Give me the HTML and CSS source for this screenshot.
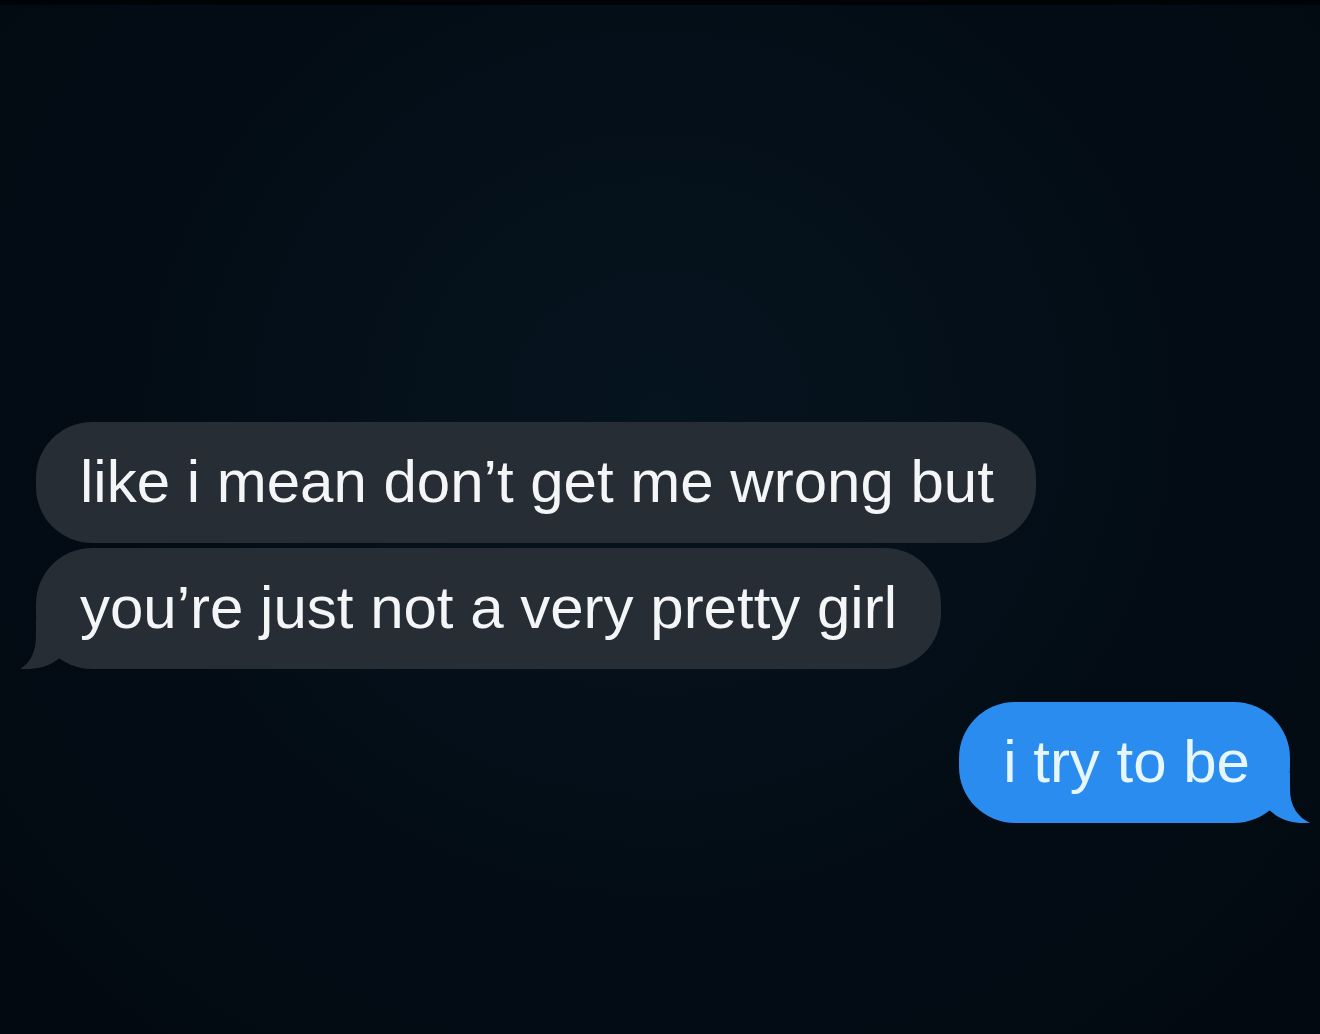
FILE: index.html
```html
<!DOCTYPE html>
<html lang="en">
<head>
    <meta charset="UTF-8">
    <meta name="viewport" content="width=device-width, initial-scale=1.0">
    <title>Messages</title>
    <link rel="stylesheet" href="styles.css">
</head>
<body>
    <div class="thread">
        <div class="bubble received">like i mean don’t get me wrong but</div>
        <div class="bubble received last">
            you’re just not a very pretty girl
            <svg class="tail tail-left" viewBox="0 0 50 50" width="50" height="50">
                <path d="M16 0 V16 C16 34 10 44 0 50 C14 51 28 48 37 41 L50 30 V0 Z"/>
            </svg>
        </div>
        <div class="bubble sent">
            i try to be
            <svg class="tail tail-right" viewBox="0 0 50 50" width="50" height="50">
                <path d="M30 0 V16 C30 34 38 44 50 50 C36 51 22 48 13 40 L0 30 V0 Z"/>
            </svg>
        </div>
    </div>
</body>
</html>
```

FILE: styles.css
```css
* {
    margin: 0;
    padding: 0;
    box-sizing: border-box;
}

body {
    background: radial-gradient(ellipse at 50% 40%, #06141f 0%, #030c15 60%, #020910 100%);
    min-height: 100vh;
    font-family: 'Liberation Sans', Arial, sans-serif;
    border-top: 5px solid #010407;
}

.thread {
    display: flex;
    flex-direction: column;
    align-items: flex-start;
    padding-top: 417px;
}

.bubble {
    position: relative;
    font-size: 60px;
    line-height: 70px;
    padding: 25px 42px 26px 44px;
    border-radius: 56px;
    white-space: nowrap;
}

.received {
    margin-left: 36px;
    background: #262d34;
    color: #f3f5f6;
    fill: #262d34;
}

.received.last {
    margin-top: 5px;
    padding-right: 44px;
}

.sent {
    align-self: flex-end;
    margin-right: 30px;
    margin-top: 33px;
    padding-right: 40px;
    background: #2b8cf0;
    color: #e6f6ff;
    fill: #2b8cf0;
}

/* tails sit on the bottom corner of the last bubble in a group */
.tail {
    position: absolute;
    bottom: 0;
    display: block;
}

.tail-left {
    left: -16px;
}

.tail-right {
    right: -20px;
}
```
